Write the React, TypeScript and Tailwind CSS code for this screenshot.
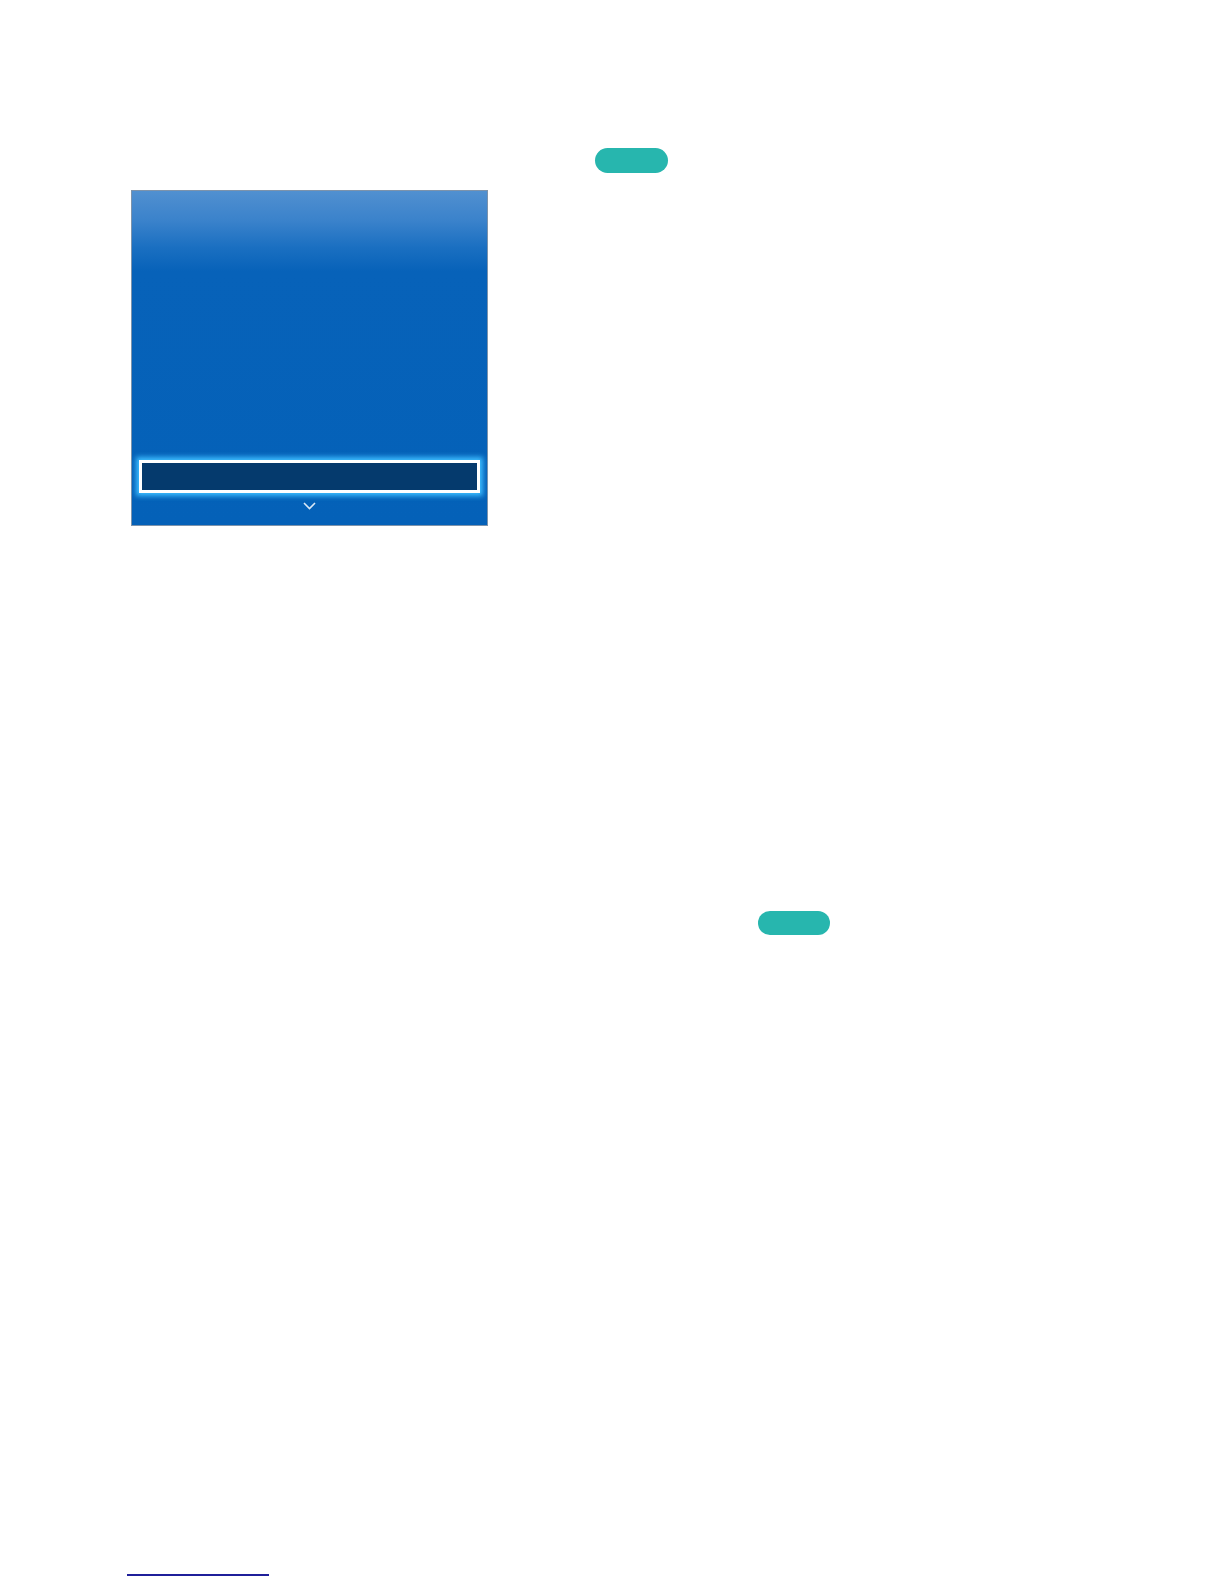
export default function App() {
  return (
    <main className="min-h-[1584px] w-full bg-white font-['Liberation_Sans',sans-serif]">
      <div className="pt-[148px] pl-[595px]">
        <div className="w-[73px] h-[25px] rounded-full bg-[#27b6ae]" />
      </div>

      <div className="mt-[17px] ml-[131px] w-[357px] h-[336px] border border-[#7d93ab] bg-[linear-gradient(to_bottom,#5190d0_0%,#3a82cb_9%,#1a6fc1_17%,#0762b9_24%,#0461b8_100%)] flex flex-col justify-end">
        <div className="px-[7px]">
          <div className="h-[33px] border-[3px] border-white bg-[#053a6d] shadow-[0_0_5px_3px_#3cbcff]" />
        </div>
        <div className="h-[32px] flex items-center justify-center">
          <svg width="13" height="8" viewBox="0 0 13 8" fill="none" className="-mt-[7px]">
            <path d="M1 1 L6.5 6.5 L12 1" stroke="#dbe9f7" strokeWidth="1.6" />
          </svg>
        </div>
      </div>

      <div className="mt-[385px] ml-[758px]">
        <div className="w-[72px] h-[24px] rounded-full bg-[#27b6ae]" />
      </div>

      <div className="mt-[639px] ml-[127px] w-[142px] h-[2px] bg-[#1f1f9a]" />
    </main>
  )
}
